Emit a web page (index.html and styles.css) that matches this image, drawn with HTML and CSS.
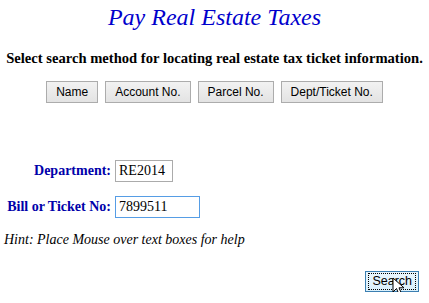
FILE: index.html
```html
<!DOCTYPE html>
<html lang="en">
<head>
    <meta charset="UTF-8">
    <title>Pay Real Estate Taxes</title>
    <link rel="stylesheet" href="styles.css">
</head>
<body>

<!-- Title -->
<h1 class="page-title">Pay Real Estate Taxes</h1>
<p class="intro">Select search method for locating real estate tax ticket information.</p>

<!-- Search method buttons -->
<div class="methods">
    <button class="btn">Name</button>
    <button class="btn">Account No.</button>
    <button class="btn">Parcel No.</button>
    <button class="btn">Dept/Ticket No.</button>
</div>

<!-- Dept / ticket form -->
<form class="search-form">
    <div class="row">
        <label class="lbl" for="dept">Department:</label>
        <input class="box box-dept" id="dept" type="text" value="RE2014">
    </div>
    <div class="row">
        <label class="lbl" for="ticket">Bill or Ticket No:</label>
        <input class="box box-ticket focused" id="ticket" type="text" value="7899511">
    </div>
    <p class="hint">Hint: Place Mouse over text boxes for help</p>
    <div class="submit-row">
        <span class="search-wrap">
            <button class="btn btn-search" type="button"><span class="focus-ring">Search</span></button>
            <svg class="cursor" width="14" height="20" viewBox="0 0 14 20">
                <path d="M1 1 L1 15 L4.5 11.5 L7 17.5 L9.5 16.5 L7 10.8 L12 10.8 Z" fill="#fff" stroke="#000" stroke-width="1" stroke-linejoin="miter"/>
            </svg>
        </span>
    </div>
</form>

</body>
</html>
```

FILE: styles.css
```css
body {
    margin: 0;
    padding: 0 5px;
    background: #fff;
    font-family: "Liberation Serif", "Times New Roman", serif;
    color: #000;
}

.page-title {
    margin: 3px 0 0;
    text-align: center;
    font-size: 24px;
    font-weight: normal;
    font-style: italic;
    color: #0000cc;
    line-height: 28px;
}

.intro {
    margin: 19px 0 0;
    text-align: center;
    font-size: 14.6px;
    font-weight: bold;
    line-height: 17px;
    white-space: nowrap;
}

.methods {
    display: flex;
    justify-content: center;
    gap: 7px;
    margin-top: 14px;
}

.btn {
    font-family: "Liberation Sans", Arial, sans-serif;
    font-size: 12px;
    color: #000;
    background: linear-gradient(#f2f2f2, #e3e3e3);
    border: 1px solid #acacac;
    border-radius: 0;
    height: 22px;
    padding: 0 9px;
}

.search-form {
    margin-top: 57px;
}

.row {
    display: flex;
    align-items: center;
    height: 22px;
    margin-bottom: 14px;
}

.lbl {
    width: 106px;
    text-align: right;
    margin-right: 4px;
    white-space: nowrap;
    font-weight: bold;
    font-size: 14px;
    color: #0000aa;
}

.box {
    font-family: "Liberation Serif", "Times New Roman", serif;
    font-size: 14px;
    height: 22px;
    box-sizing: border-box;
    border: 1px solid #ababab;
    padding: 0 3px;
    margin: 0;
    color: #000;
    outline: none;
}

.box-dept {
    width: 58px;
}

.box-ticket {
    width: 85px;
}

.focused {
    border-color: #569de5;
}

.hint {
    margin: 11px 0 0 -1px;
    font-style: italic;
    font-size: 14px;
}

.submit-row {
    display: flex;
    justify-content: flex-end;
    margin-top: 23px;
    padding-right: 5px;
}

.search-wrap {
    position: relative;
}

.btn-search {
    height: 21px;
    padding: 0 2px;
    border-color: #3c7fb1;
    background: linear-gradient(#eaf6fd, #d9f0fc);
    font-size: 12.5px;
}

.focus-ring {
    display: inline-block;
    border: 1px dotted #000;
    padding: 0 3px;
    line-height: 15px;
}

.cursor {
    position: absolute;
    left: 27px;
    top: 6px;
}
```
